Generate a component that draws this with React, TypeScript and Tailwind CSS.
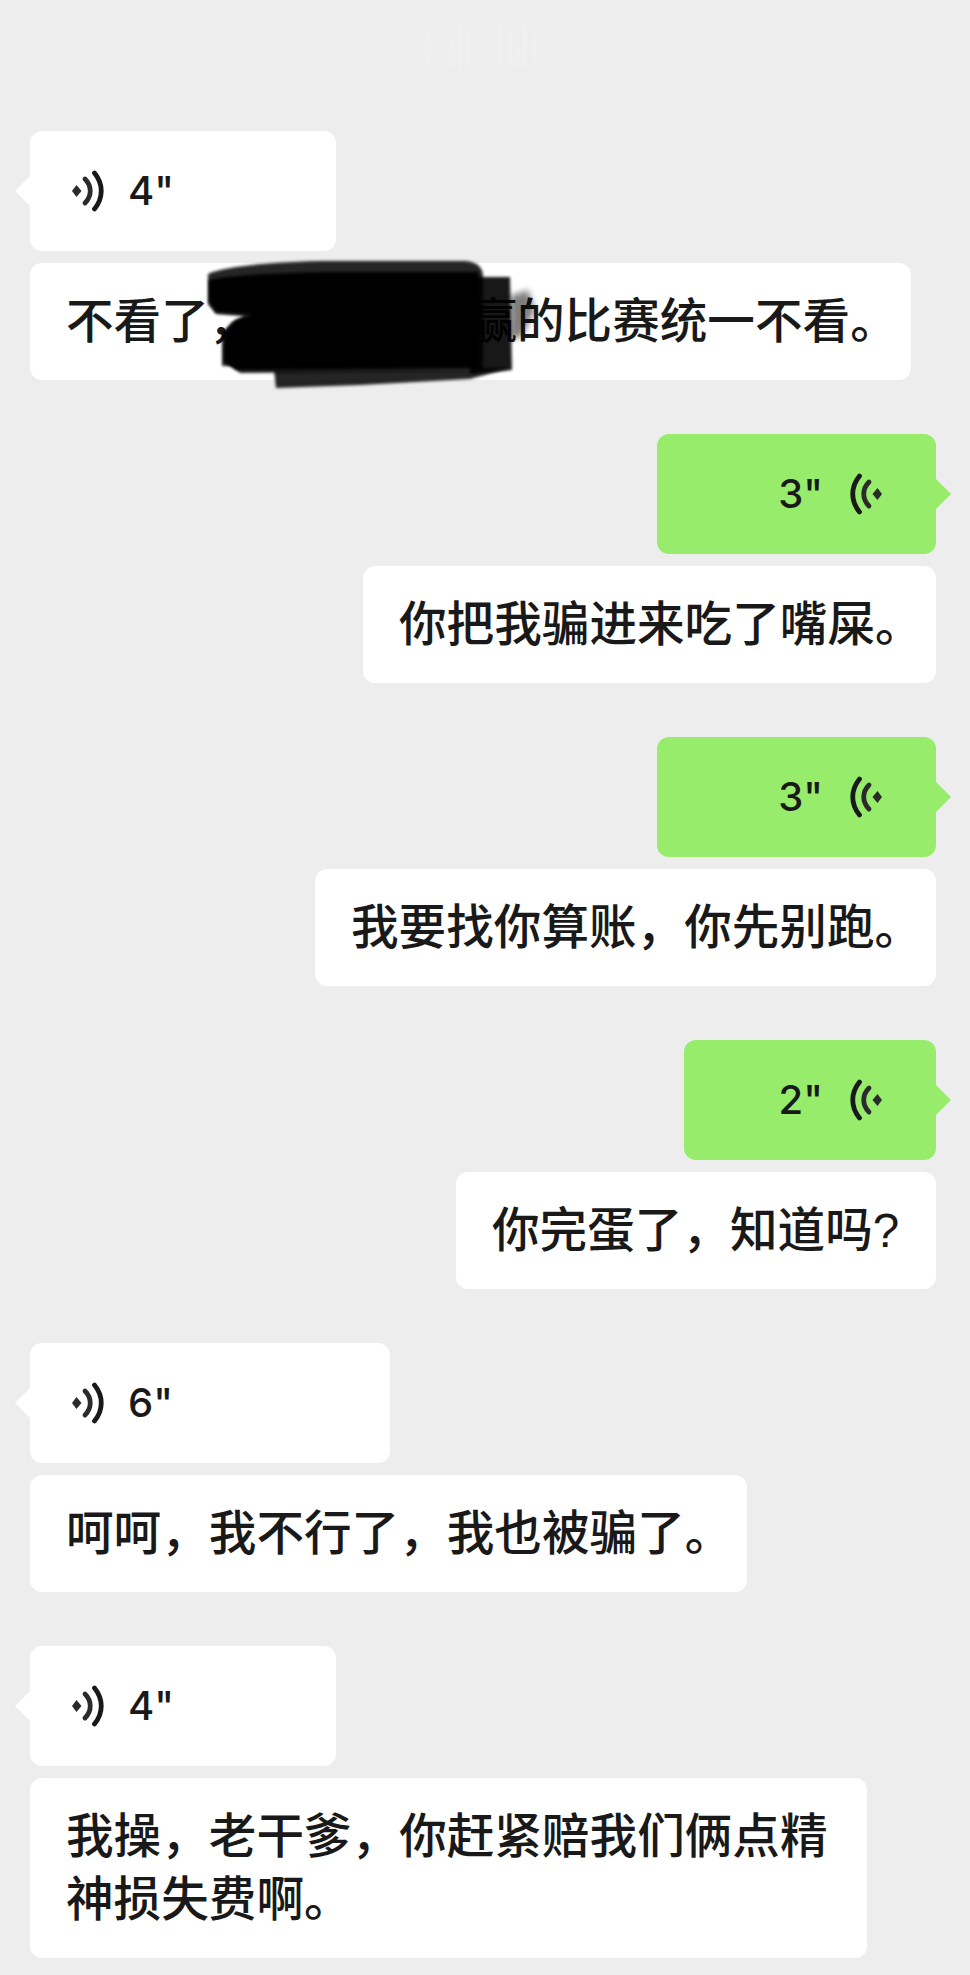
const FONT = "font-['Liberation_Sans','Noto_Sans_CJK_SC',sans-serif]";

function WaveIcon({ flip }: { flip?: boolean }) {
  return (
    <svg width="32" height="42" viewBox="0 0 32 42" className={flip ? '-scale-x-100' : ''}>
      <path d="M0 21 L4.5 15 L9.5 21 L4.5 27 Z" fill="#2b2b2b" />
      <path d="M13 9 C20 16 20 26 13 33" fill="none" stroke="#2b2b2b" strokeWidth="4.8" strokeLinecap="round" />
      <path d="M22.5 3 C31.5 14 31.5 28 22.5 39" fill="none" stroke="#191919" strokeWidth="4.8" strokeLinecap="round" />
    </svg>
  );
}

function VoiceLeft({ seconds, width }: { seconds: string; width: string }) {
  return (
    <div className={`relative flex h-[120px] items-center rounded-xl bg-white pl-[42px] ${width}`}>
      <div className="absolute -left-[15px] top-1/2 h-[30px] w-[30px] -translate-y-1/2 bg-white [clip-path:polygon(0_50%,50%_0,100%_0,100%_100%,50%_100%)]" />
      <WaveIcon />
      <span className="ml-[24px] font-['Inter',sans-serif] text-[40px] font-medium leading-none text-[#191919]">{seconds}</span>
    </div>
  );
}

function VoiceRight({ seconds, width }: { seconds: string; width: string }) {
  return (
    <div className={`relative flex h-[120px] items-center justify-end rounded-xl bg-[#98ec6c] pr-[54px] ${width}`}>
      <span className="mr-[27px] font-['Inter',sans-serif] text-[40px] font-medium leading-none text-[#191919]">{seconds}</span>
      <WaveIcon flip />
      <div className="absolute -right-[15px] top-1/2 h-[30px] w-[30px] -translate-y-1/2 bg-[#98ec6c] [clip-path:polygon(100%_50%,50%_0,0_0,0_100%,50%_100%)]" />
    </div>
  );
}

function TextBubble({ children, width }: { children: React.ReactNode; width: string }) {
  return (
    <div className={`relative rounded-xl bg-white py-[27px] pl-[36px] text-[47.6px] font-medium leading-[63px] text-[#191919] ${width}`}>
      {children}
    </div>
  );
}

// scribble over the name, coordinates are page coordinates
function Redaction() {
  return (
    <svg viewBox="190 250 360 150" className="absolute left-[160px] top-[-13px] h-[150px] w-[360px]">
      <defs>
        <filter id="soft" x="-10%" y="-20%" width="120%" height="140%">
          <feGaussianBlur stdDeviation="1.6" />
        </filter>
        <filter id="softer" x="-30%" y="-30%" width="160%" height="160%">
          <feGaussianBlur stdDeviation="3" />
        </filter>
      </defs>
      <path d="M510 296 L528 290 L535 310 L522 336 L510 340 Z" fill="#000" opacity="0.5" filter="url(#softer)" />
      <path d="M470 277 L510 277 L512 370 L470 374 Z" fill="#000" opacity="0.9" filter="url(#soft)" />
      <path d="M274 370 L510 368 L470 379 L360 385 L276 388 Z" fill="#000" opacity="0.85" filter="url(#soft)" />
      <path d="M208 274 C225 266 280 261 330 261 L465 261 C478 262 483 268 483 276 L483 370 L240 373 L232 366 L222 366 L222 334 L232 322 L244 316 L216 314 L208 304 Z" fill="#000" opacity="0.85" filter="url(#soft)" />
      <path d="M209 280 C240 274 300 272 340 272 L478 272 L478 368 L236 370 L224 362 L224 332 L236 320 L252 315 L216 312 L209 302 Z" fill="#000" filter="url(#soft)" />
    </svg>
  );
}

// ghost of the blurred-out title at the top
function TitleResidue() {
  return (
    <svg viewBox="400 0 170 80" className="absolute left-[400px] top-0 h-[80px] w-[170px]">
      <defs>
        <filter id="haze">
          <feGaussianBlur stdDeviation="1" />
        </filter>
      </defs>
      <g fill="#f0f0f0" filter="url(#haze)">
        <rect x="425" y="32" width="7" height="32" />
        <rect x="448" y="40" width="7" height="27" />
        <rect x="458" y="24" width="5" height="46" />
        <rect x="465" y="32" width="5" height="32" />
        <rect x="497" y="24" width="6" height="42" />
        <rect x="507" y="32" width="5" height="34" />
        <rect x="515" y="48" width="5" height="18" />
        <rect x="522" y="24" width="6" height="42" />
        <rect x="532" y="32" width="3" height="32" />
      </g>
    </svg>
  );
}

export default function App() {
  return (
    <div className={`relative h-[1975px] w-[970px] overflow-hidden bg-[#ededed] pl-[30px] pr-[34px] pt-[131px] ${FONT}`}>
      <TitleResidue />
      <div className="flex flex-col">
        <div className="flex flex-col items-start gap-[12px]">
          <VoiceLeft seconds={'4"'} width="w-[306px]" />
          <TextBubble width="w-[881px]">
            <span className="whitespace-nowrap">
              不看了，<span className="inline-block w-[213px]" />赢的比赛统一不看。
            </span>
            <Redaction />
          </TextBubble>
        </div>

        <div className="mt-[54px] flex flex-col items-end gap-[12px]">
          <VoiceRight seconds={'3"'} width="w-[279px]" />
          <TextBubble width="w-[573px]">你把我骗进来吃了嘴屎。</TextBubble>
        </div>

        <div className="mt-[54px] flex flex-col items-end gap-[12px]">
          <VoiceRight seconds={'3"'} width="w-[279px]" />
          <TextBubble width="w-[621px]">我要找你算账，你先别跑。</TextBubble>
        </div>

        <div className="mt-[54px] flex flex-col items-end gap-[12px]">
          <VoiceRight seconds={'2"'} width="w-[252px]" />
          <TextBubble width="w-[480px]">你完蛋了，知道吗?</TextBubble>
        </div>

        <div className="mt-[54px] flex flex-col items-start gap-[12px]">
          <VoiceLeft seconds={'6"'} width="w-[360px]" />
          <TextBubble width="w-[717px]">呵呵，我不行了，我也被骗了。</TextBubble>
        </div>

        <div className="mt-[54px] flex flex-col items-start gap-[12px]">
          <VoiceLeft seconds={'4"'} width="w-[306px]" />
          <TextBubble width="w-[837px]">我操，老干爹，你赶紧赔我们俩点精神损失费啊。</TextBubble>
        </div>
      </div>
    </div>
  );
}
